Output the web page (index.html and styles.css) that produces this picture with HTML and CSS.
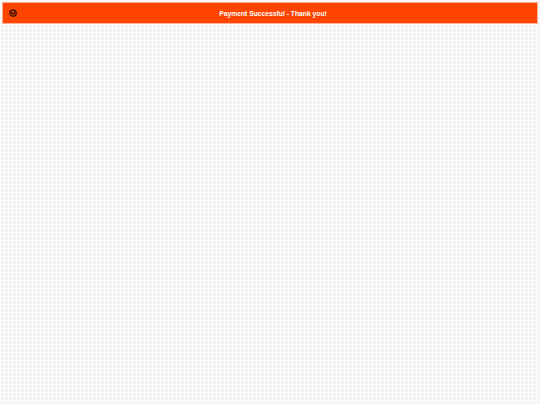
FILE: index.html
```html
<!DOCTYPE html>
<html>
<head>
<meta charset="utf-8">
<link rel="stylesheet" href="styles.css">
</head>
<body>
<div class="banner">
  <span class="icon">
    <svg width="8" height="8" viewBox="0 0 10 10">
      <circle cx="5" cy="5" r="4" fill="none" stroke="#2a0e00" stroke-width="1.6"/>
      <path d="M3.3 3.2 V5.2 Q5 7.6 6.7 5.2 V3.2" fill="none" stroke="#2a0e00" stroke-width="1.4"/>
    </svg>
  </span>
  <span class="msg">Payment Successful - Thank you!</span>
</div>
</body>
</html>
```
FILE: styles.css
```css
html, body {
  margin: 0;
  height: 100%;
}
body {
  padding: 3px;
  box-sizing: border-box;
  background-color: #f3f3f3;
  background-image:
    repeating-linear-gradient(0deg, rgba(255,255,255,0.8) 0 1px, transparent 1px 4px),
    repeating-linear-gradient(90deg, rgba(255,255,255,0.8) 0 1px, transparent 1px 4px);
  font-family: "Liberation Sans", Arial, sans-serif;
}
.banner {
  display: flex;
  align-items: center;
  height: 20px;
  box-sizing: border-box;
  background: #ff4500;
  box-shadow: 0 0 0 1px rgba(255, 120, 70, 0.55);
  padding: 0 8px 0 6px;
}
.icon {
  display: flex;
  width: 8px;
  height: 8px;
}
.msg {
  flex: 1;
  text-align: center;
  color: #fff;
  font-weight: bold;
  font-size: 6.75px;
}
```
